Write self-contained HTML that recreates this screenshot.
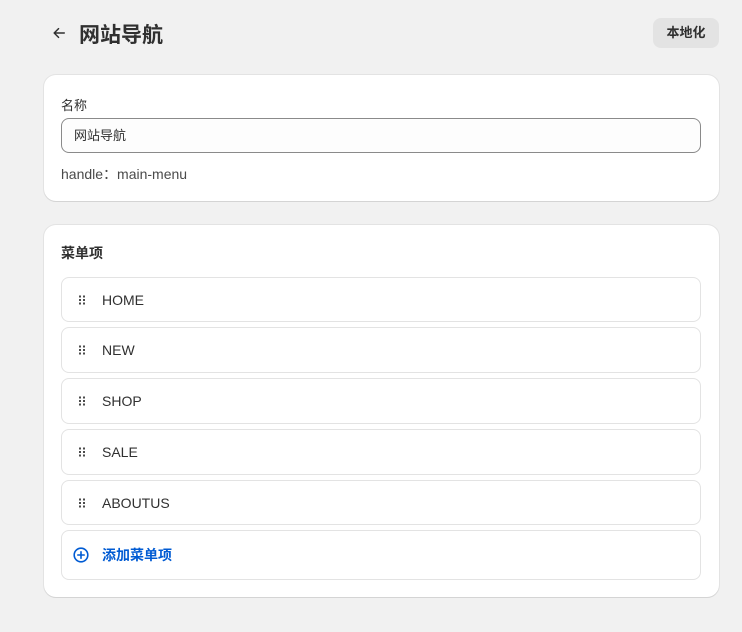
<!DOCTYPE html>
<html><head><meta charset="utf-8"><style>
*{box-sizing:border-box;margin:0;padding:0}
body{width:742px;height:632px;background:#f1f1f1;font-family:"Liberation Sans","Noto Sans CJK SC",sans-serif;color:#303030;position:relative;overflow:hidden}
.abs{position:absolute}
.card{position:absolute;left:44px;width:675px;background:#fff;border-radius:12px;box-shadow:0 1px 0 #d4d4d4,0 0 0 1px #e3e3e3}
.item{position:absolute;left:17px;width:640px;border:1px solid #e3e3e3;border-radius:8px;font-size:14px;color:#303030}
.item span{position:absolute;left:40px;top:50%;transform:translateY(-50%)}
.dots{position:absolute;left:17px;top:50%;transform:translateY(-50%);width:6px;height:9px}
</style></head><body>
<svg class="abs" style="left:52px;top:26px" width="14" height="14" viewBox="0 0 16 16"><path d="M14 8H2.5M7.5 3L2.5 8l5 5" fill="none" stroke="#303030" stroke-width="1.7" stroke-linecap="round" stroke-linejoin="round"/></svg>
<div class="abs" style="left:79px;top:19px;font-size:21px;font-weight:bold;color:#303030">网站导航</div>
<div class="abs" style="left:653px;top:18px;width:66px;height:30px;background:#e3e3e3;border-radius:8px;font-size:13px;font-weight:bold;text-align:center;line-height:30px">本地化</div>
<div class="card" style="top:75px;height:126px">
<div class="abs" style="left:17px;top:20px;font-size:13px">名称</div>
<div class="abs" style="left:17px;top:43px;width:640px;height:35px;border:1px solid #8a8a8a;border-radius:8px;background:#fdfdfd;font-size:13px;padding-left:12px;line-height:33px">网站导航</div>
<div class="abs" style="left:17px;top:89px;font-size:14px;color:#4a4a4a">handle：main-menu</div>
</div>
<div class="card" style="top:225px;height:372px">
<div class="abs" style="left:17px;top:18px;font-size:14px;font-weight:bold">菜单项</div>
<div class="item" style="top:52px;height:45px"><svg class="dots"><g fill="#4a4a4a"><rect x="0" y="0" width="2" height="2"/><rect x="4" y="0" width="2" height="2"/><rect x="0" y="3.5" width="2" height="2"/><rect x="4" y="3.5" width="2" height="2"/><rect x="0" y="7" width="2" height="2"/><rect x="4" y="7" width="2" height="2"/></g></svg><span>HOME</span></div>
<div class="item" style="top:102px;height:46px"><svg class="dots"><g fill="#4a4a4a"><rect x="0" y="0" width="2" height="2"/><rect x="4" y="0" width="2" height="2"/><rect x="0" y="3.5" width="2" height="2"/><rect x="4" y="3.5" width="2" height="2"/><rect x="0" y="7" width="2" height="2"/><rect x="4" y="7" width="2" height="2"/></g></svg><span>NEW</span></div>
<div class="item" style="top:153px;height:46px"><svg class="dots"><g fill="#4a4a4a"><rect x="0" y="0" width="2" height="2"/><rect x="4" y="0" width="2" height="2"/><rect x="0" y="3.5" width="2" height="2"/><rect x="4" y="3.5" width="2" height="2"/><rect x="0" y="7" width="2" height="2"/><rect x="4" y="7" width="2" height="2"/></g></svg><span>SHOP</span></div>
<div class="item" style="top:204px;height:46px"><svg class="dots"><g fill="#4a4a4a"><rect x="0" y="0" width="2" height="2"/><rect x="4" y="0" width="2" height="2"/><rect x="0" y="3.5" width="2" height="2"/><rect x="4" y="3.5" width="2" height="2"/><rect x="0" y="7" width="2" height="2"/><rect x="4" y="7" width="2" height="2"/></g></svg><span>SALE</span></div>
<div class="item" style="top:255px;height:45px"><svg class="dots"><g fill="#4a4a4a"><rect x="0" y="0" width="2" height="2"/><rect x="4" y="0" width="2" height="2"/><rect x="0" y="3.5" width="2" height="2"/><rect x="4" y="3.5" width="2" height="2"/><rect x="0" y="7" width="2" height="2"/><rect x="4" y="7" width="2" height="2"/></g></svg><span>ABOUTUS</span></div>
<div class="item" style="top:305px;height:50px"><svg class="abs" style="left:11px;top:16px" width="16" height="16" viewBox="0 0 16 16"><circle cx="8" cy="8" r="6.8" fill="none" stroke="#005bd3" stroke-width="1.6"/><path d="M8 4.8v6.4M4.8 8h6.4" stroke="#005bd3" stroke-width="1.6" stroke-linecap="round"/></svg><span style="color:#005bd3;font-weight:bold">添加菜单项</span></div>
</div>
</body></html>
